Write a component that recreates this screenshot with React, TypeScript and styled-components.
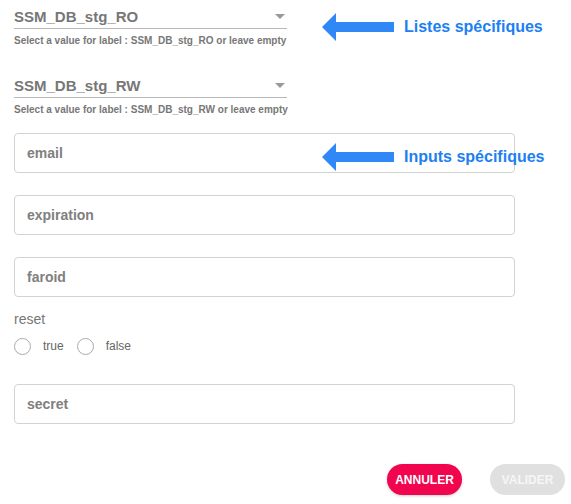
import styled, { createGlobalStyle } from 'styled-components';

const GlobalStyle = createGlobalStyle`
  body {
    margin: 0;
    background: #fff;
    font-family: "Liberation Sans", Arial, sans-serif;
  }
`;

const selects = ['SSM_DB_stg_RO', 'SSM_DB_stg_RW'];

const Arrow = () => (
  <svg width="72" height="30" viewBox="0 0 72 30">
    <path d="M0 15 L14 1 L14 10 L72 10 L72 20 L14 20 L14 29 Z" fill="#2f88f6" />
  </svg>
);

const App = () => {
  return (
    <>
      <GlobalStyle />
      <Page>
        {selects.map((name) => (
          <SelectField key={name}>
            <SelectBox>
              <span>{name}</span>
              <Caret />
            </SelectBox>
            <Helper>Select a value for label : {name} or leave empty</Helper>
          </SelectField>
        ))}
        <Inputs>
          <TextInput placeholder="email" />
          <TextInput placeholder="expiration" />
          <TextInput placeholder="faroid" />
        </Inputs>
        <RadioGroup>
          <GroupLabel>reset</GroupLabel>
          <RadioRow>
            <RadioOption>
              <Circle />
              true
            </RadioOption>
            <RadioOption>
              <Circle />
              false
            </RadioOption>
          </RadioRow>
        </RadioGroup>
        <TextInput placeholder="secret" $top={28} />
        <Actions>
          <Button>ANNULER</Button>
          <Button $disabled>VALIDER</Button>
        </Actions>
        <Note $top={12}>
          <Arrow />
          <span>Listes spécifiques</span>
        </Note>
        <Note $top={142}>
          <Arrow />
          <span>Inputs spécifiques</span>
        </Note>
      </Page>
    </>
  );
};

const Page = styled.div`
  position: relative;
  width: 571px;
  height: 504px;
  padding: 4px 0 0 14px;
  box-sizing: border-box;
  overflow: hidden;
`;

const SelectField = styled.div`
  width: 273px;
  & + & {
    margin-top: 25px;
  }
`;

const SelectBox = styled.div`
  display: flex;
  align-items: center;
  justify-content: space-between;
  height: 24px;
  border-bottom: 1px solid #b8b8b8;
  padding-right: 2px;
  span {
    font-size: 15px;
    font-weight: 700;
    color: #777;
  }
`;

const Caret = styled.i`
  width: 0;
  height: 0;
  border-left: 5px solid transparent;
  border-right: 5px solid transparent;
  border-top: 5px solid #999;
`;

const Helper = styled.div`
  margin-top: 5px;
  font-size: 10px;
  line-height: 14px;
  font-weight: 700;
  color: #777;
  white-space: nowrap;
`;

const Inputs = styled.div`
  display: flex;
  flex-direction: column;
  gap: 22px;
  margin-top: 16px;
`;

const TextInput = styled.input<{ $top?: number }>`
  display: block;
  width: 501px;
  height: 40px;
  box-sizing: border-box;
  margin-top: ${(p) => p.$top ?? 0}px;
  padding: 0 12px;
  border: 1px solid #d2d2d2;
  border-radius: 4px;
  font-family: "Liberation Sans", Arial, sans-serif;
  font-size: 14px;
  font-weight: 700;
  outline: none;
  &::placeholder {
    color: #808080;
  }
`;

const RadioGroup = styled.div`
  margin-top: 14px;
`;

const GroupLabel = styled.div`
  font-size: 14px;
  line-height: 16px;
  color: #777;
`;

const RadioRow = styled.div`
  display: flex;
  align-items: center;
  gap: 13px;
  margin-top: 9px;
  height: 20px;
`;

const RadioOption = styled.label`
  display: flex;
  align-items: center;
  gap: 12px;
  font-size: 12px;
  color: #666;
`;

const Circle = styled.span`
  width: 17px;
  height: 17px;
  border: 1.5px solid #aaa;
  border-radius: 50%;
  box-sizing: border-box;
`;

const Actions = styled.div`
  display: flex;
  justify-content: flex-end;
  gap: 28px;
  margin-top: 40px;
  padding-right: 6px;
`;

const Button = styled.button<{ $disabled?: boolean }>`
  width: 75px;
  height: 31px;
  border: none;
  border-radius: 16px;
  background: ${(p) => (p.$disabled ? '#e0e0e0' : '#f0054e')};
  color: ${(p) => (p.$disabled ? '#f6f6f6' : '#fff')};
  font-family: "Liberation Sans", Arial, sans-serif;
  font-size: 12px;
  font-weight: 700;
  box-shadow: ${(p) => (p.$disabled ? 'none' : '0 1px 3px rgba(0,0,0,0.2)')};
`;

const Note = styled.div<{ $top: number }>`
  position: absolute;
  left: 322px;
  top: ${(p) => p.$top}px;
  display: flex;
  align-items: center;
  gap: 10px;
  span {
    font-size: 16px;
    font-weight: 700;
    color: #1c80f2;
  }
`;

export default App;
